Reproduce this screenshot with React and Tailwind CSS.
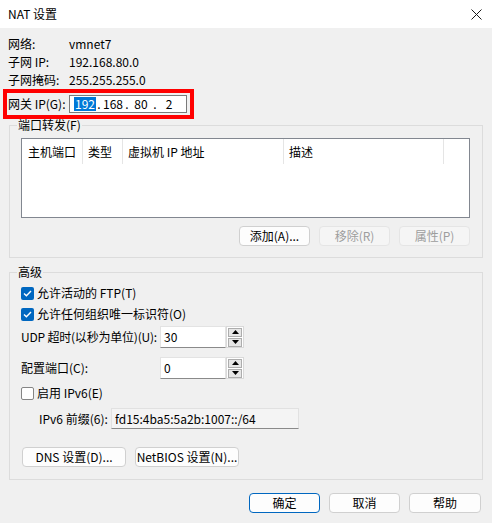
const Btn = ({ children, className = 'w-[71px]', primary, disabled }) => (
  <button
    className={`${className} h-[20px] rounded-[4px] flex items-center justify-center leading-none whitespace-nowrap ${
      primary
        ? 'bg-[#fdfdfd] border border-[#0067c0]'
        : disabled
        ? 'bg-[#f5f5f5] border border-[#e5e5e5] text-[#9d9d9d]'
        : 'bg-[#fdfdfd] border border-[#d0d0d0]'
    }`}
  >
    {children}
  </button>
);

const Check = ({ checked }) =>
  checked ? (
    <span className="w-[13px] h-[13px] rounded-[2px] bg-[#0067c0] flex items-center justify-center shrink-0">
      <svg width="9" height="7" viewBox="0 0 9 7">
        <path d="M1 3.5 L3.4 5.8 L8 1" fill="none" stroke="white" strokeWidth="1.4" />
      </svg>
    </span>
  ) : (
    <span className="w-[13px] h-[13px] rounded-[2px] bg-white border border-[#858585] shrink-0" />
  );

const Spin = ({ value }) => (
  <div className="flex h-[22px] shrink-0">
    <div className="w-[66px] h-full bg-white border border-[#e3e3e3] border-b-[#8a8a8a] flex items-center pl-[3px]">
      {value}
    </div>
    <div className="w-[18px] h-full bg-white border border-[#d9d9d9] flex flex-col justify-center gap-[1px] px-[1px]">
      <div className="h-[9px] bg-[#e6e6e6] border border-[#adadad] flex items-center justify-center">
        <svg width="7" height="4" viewBox="0 0 7 4"><path d="M0 4 L3.5 0 L7 4 Z" fill="#000" /></svg>
      </div>
      <div className="h-[9px] bg-[#e6e6e6] border border-[#adadad] flex items-center justify-center">
        <svg width="7" height="4" viewBox="0 0 7 4"><path d="M0 0 L3.5 4 L7 0 Z" fill="#000" /></svg>
      </div>
    </div>
  </div>
);

const Group = ({ title, children }) => (
  <fieldset className="mx-[9px] border border-[#dcdcdc]">
    <legend className="ml-[7px] px-[1px] leading-[12px]">{title}</legend>
    {children}
  </fieldset>
);

export default function App() {
  return (
    <div className="w-[492px] h-[523px] bg-[#f0f0f0] text-[12px] text-black font-['Noto_Sans_CJK_SC',sans-serif] flex flex-col overflow-hidden whitespace-nowrap">
      <div className="h-[28px] bg-white flex items-center justify-between pl-[8px] pr-[10px] shrink-0">
        <span>NAT 设置</span>
        <svg width="11" height="11" viewBox="0 0 11 11">
          <path d="M0.5 0.5 L10.5 10.5 M10.5 0.5 L0.5 10.5" stroke="#1a1a1a" strokeWidth="1" />
        </svg>
      </div>

      <div className="pt-[7px] pl-[8px]">
        <div className="h-[18px] flex items-center"><span className="w-[61px]">网络:</span><span>vmnet7</span></div>
        <div className="h-[18px] flex items-center"><span className="w-[61px]">子网 IP:</span><span>192.168.80.0</span></div>
        <div className="h-[18px] flex items-center"><span className="w-[61px]">子网掩码:</span><span>255.255.255.0</span></div>
      </div>

      <div className="ml-[3px] w-[191px] h-[30px] border-4 border-[#ff0000] flex items-center pl-[1px]">
        <span className="w-[61px]">网关 IP(G):</span>
        <div className="w-[118px] h-[18px] bg-white border border-[#7a7a7a] flex items-center pl-[4px]">
          <span className="w-[22px] flex justify-center"><span className="bg-[#0078d7] text-white px-[1px] leading-[14px]">192</span></span>
          <span className="w-[6px] text-center">.</span>
          <span className="w-[22px] text-center">168</span>
          <span className="w-[6px] text-center">.</span>
          <span className="w-[22px] text-center">80</span>
          <span className="w-[6px] text-center">.</span>
          <span className="w-[22px] text-center">2</span>
        </div>
      </div>

      <Group title="端口转发(F)">
        <div className="mt-[7px] ml-[11px] w-[449px] h-[80px] border border-[#828790] bg-white">
          <div className="flex h-[25px] items-center">
            <div className="w-[61px] h-full border-r border-[#e5e5e5] flex items-center pl-[6px]">主机端口</div>
            <div className="w-[40px] h-full border-r border-[#e5e5e5] flex items-center pl-[5px]">类型</div>
            <div className="w-[161px] h-full border-r border-[#e5e5e5] flex items-center pl-[5px]">虚拟机 IP 地址</div>
            <div className="w-[160px] h-full border-r border-[#e5e5e5] flex items-center pl-[5px]">描述</div>
          </div>
        </div>
        <div className="mt-[8px] flex justify-end gap-[9px] pr-[12px] pb-[11px]">
          <Btn>添加(A)...</Btn>
          <Btn disabled>移除(R)</Btn>
          <Btn disabled>属性(P)</Btn>
        </div>
      </Group>

      <div className="mt-[8px]">
        <Group title="高级">
          <div className="pl-[11px] pb-[12px] flex flex-col">
            <div className="mt-[6px] h-[18px] flex items-center gap-[3px]"><Check checked /><span>允许活动的 FTP(T)</span></div>
            <div className="mt-[3px] h-[18px] flex items-center gap-[3px]"><Check checked /><span>允许任何组织唯一标识符(O)</span></div>
            <div className="mt-[3px] h-[22px] flex items-center">
              <span className="w-[139px] shrink-0 tracking-[-0.2px]">UDP 超时(以秒为单位)(U):</span>
              <Spin value="30" />
            </div>
            <div className="mt-[9px] h-[22px] flex items-center">
              <span className="w-[139px] shrink-0">配置端口(C):</span>
              <Spin value="0" />
            </div>
            <div className="mt-[5px] h-[18px] flex items-center gap-[3px]"><Check /><span>启用 IPv6(E)</span></div>
            <div className="mt-[6px] h-[21px] flex items-center pl-[18px]">
              <span className="w-[72px] shrink-0">IPv6 前缀(6):</span>
              <div className="w-[188px] h-full bg-[#f4f4f4] border border-[#e1e1e1] border-b-[#8a8a8a] flex items-center pl-[3px]">
                fd15:4ba5:5a2b:1007::/64
              </div>
            </div>
            <div className="mt-[18px] flex gap-[9px] ml-[1px]">
              <Btn className="w-[104px]">DNS 设置(D)...</Btn>
              <Btn className="w-[104px]">NetBIOS 设置(N)...</Btn>
            </div>
          </div>
        </Group>
      </div>

      <div className="mt-[13px] flex justify-end gap-[9px] pr-[11px]">
        <Btn primary>确定</Btn>
        <Btn>取消</Btn>
        <Btn className="w-[72px]">帮助</Btn>
      </div>
    </div>
  );
}
